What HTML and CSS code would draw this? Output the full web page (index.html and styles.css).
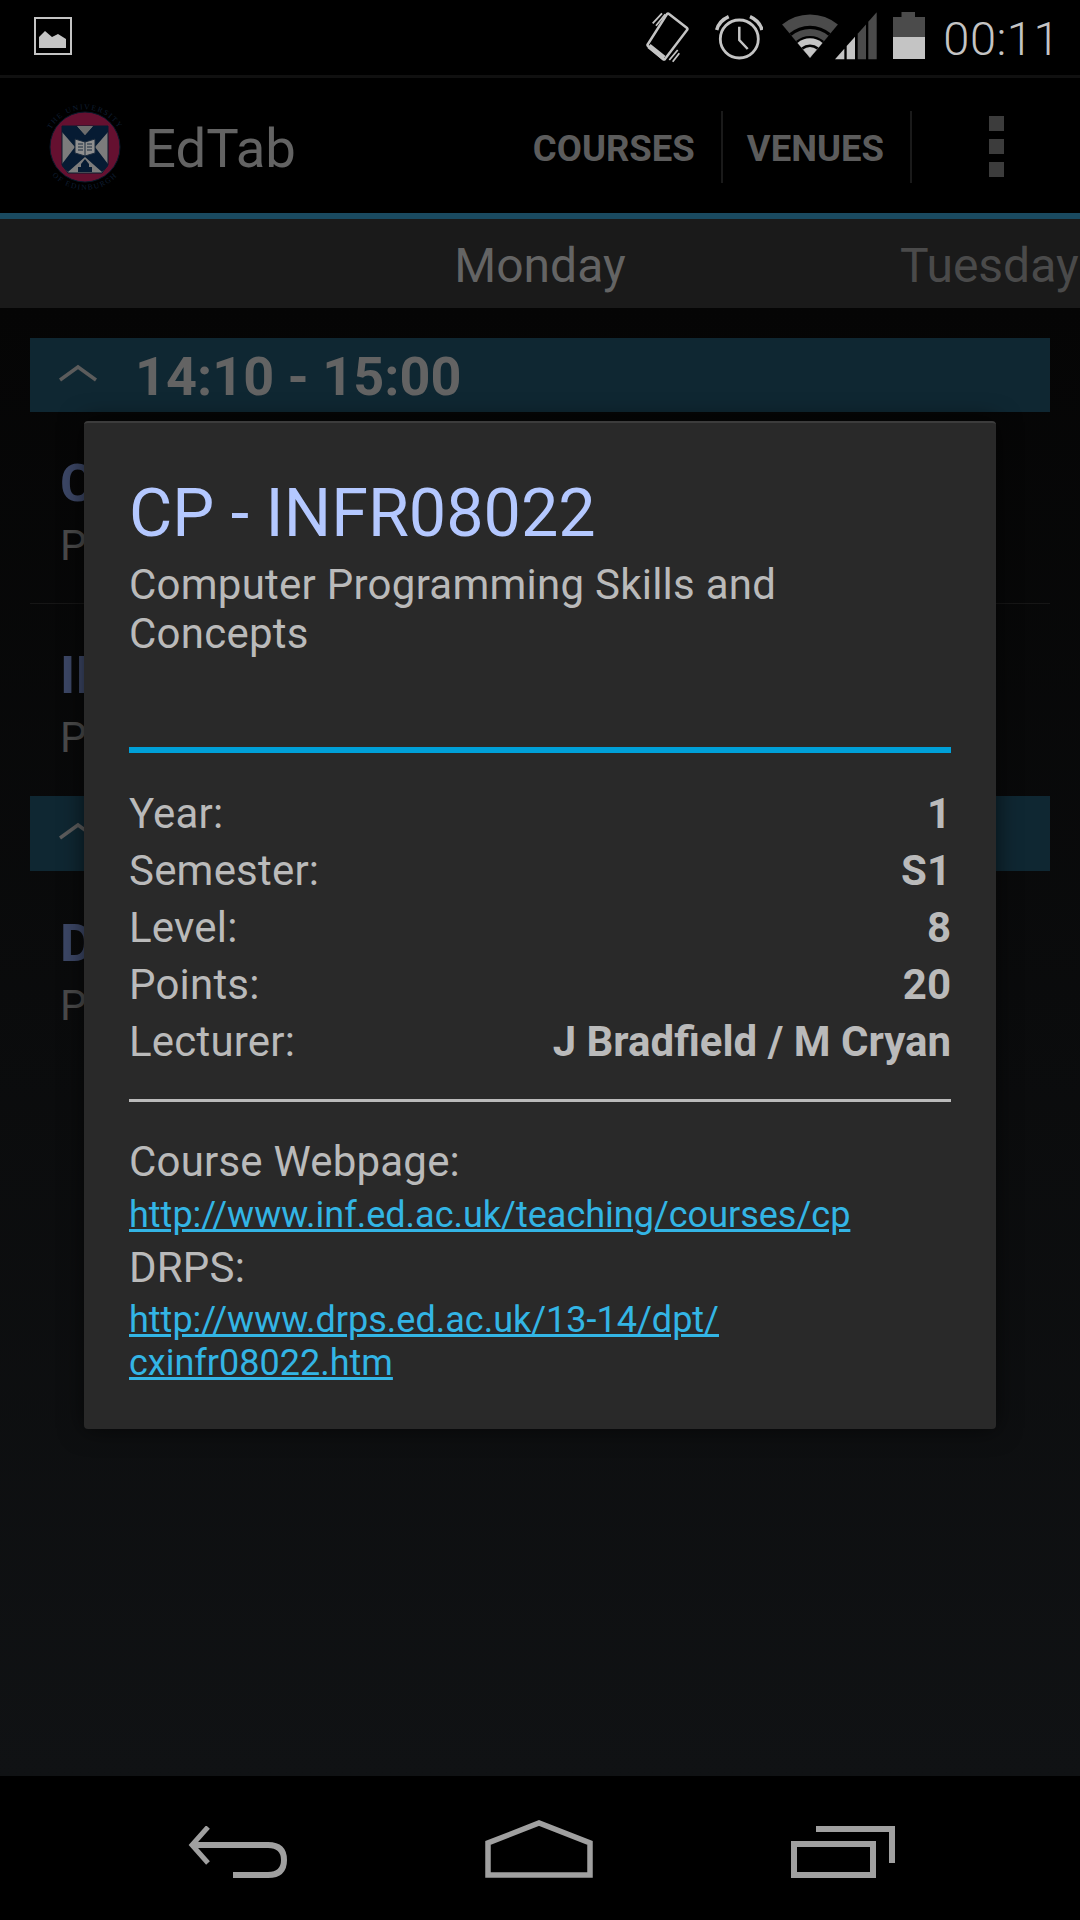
FILE: index.html
```html
<!DOCTYPE html>
<html lang="en">
<head>
    <meta charset="UTF-8">
    <title>EdTab</title>
    <link rel="stylesheet" href="styles.css">
</head>
<body>
    <div class="screen">
        <!-- status bar -->
        <div class="status">
            <svg class="notif" width="38" height="38" viewBox="0 0 38 38">
                <rect x="1" y="1" width="36" height="36" fill="none" stroke="#c4c4c4" stroke-width="2"/>
                <path d="M5 31V20L11 14L18 20L24 17L32 22V31Z" fill="#c4c4c4"/>
            </svg>
            <div class="status-icons">
                <svg class="phone" width="44" height="52" viewBox="0 0 44 52" fill="none" stroke="#c4c4c4">
                    <path d="M23 2L41 16Q42 17 41 18L19 47Q18 48 17 47L2 34Q1 33 2 32L21 2Q22 1 23 2Z" stroke-width="2.500"/>
                    <path d="M3 34L18 46" stroke-width="5"/>
                    <path d="M6.700 11.300L16 1.300M10 13.700L19.300 2.300M23.300 48L31.700 38M26.700 49.700L33.300 41.300" stroke-width="1.800"/>
                </svg>
                <svg class="alarm" width="48" height="46" viewBox="0 0 48 46" fill="none" stroke="#c4c4c4">
                    <circle cx="24.300" cy="24" r="19" stroke-width="2.800"/>
                    <path d="M24.300 11.700V25L32.700 34" stroke-width="2.500"/>
                    <path d="M1.700 15Q4 6 13.700 1.700M47 15Q44.700 6 35 1.700" stroke-width="3.500"/>
                </svg>
                <svg class="wifi" width="96" height="48" viewBox="0 0 96 48">
                    <path d="M29 45.700L1.100 12.600A43.400 43.400 0 0 1 56.900 12.600Z" fill="#4b4b4b"/>
                    <path d="M29 45.700L8.400 21.300A32 32 0 0 1 49.600 21.300Z" fill="#000"/>
                    <path d="M29 45.700L10.500 23.800A28.700 28.700 0 0 1 47.500 23.800Z" fill="#4b4b4b"/>
                    <path d="M29 45.700L15 29.100A21.700 21.700 0 0 1 43 29.100Z" fill="#000"/>
                    <path d="M29 45.700L16.500 30.900A19.400 19.400 0 0 1 41.500 30.900Z" fill="#c4c4c4"/>
                    <path d="M29 45.700L20.400 35.500A13.400 13.400 0 0 1 37.600 35.500Z" fill="#000"/>
                    <path d="M29 45.700L22.100 37.500A10.700 10.700 0 0 1 35.900 37.500Z" fill="#c4c4c4"/>
                    <path d="M54 47.300L63.300 36.800V47.300Z" fill="#c4c4c4"/>
                    <path d="M65.700 34.100L74 24.800V47.300H65.700Z" fill="#c4c4c4"/>
                    <path d="M76.700 21.700L85 12.400V47.300H76.700Z" fill="#4b4b4b"/>
                    <path d="M87.300 9.800L95.700 0.300V47.300H87.300Z" fill="#4b4b4b"/>
                </svg>
                <svg class="battery" width="32" height="47" viewBox="0 0 32 47">
                    <path d="M8.500 0H22V5H32V47H0V5H8.500Z" fill="#4b4b4b"/>
                    <rect y="25" width="32" height="22" fill="#c4c4c4"/>
                </svg>
            </div>
            <span class="clock">00:11</span>
        </div>

        <!-- action bar -->
        <div class="actionbar">
            <svg class="crest" width="90" height="90" viewBox="0 0 90 90">
                <defs>
                    <path id="ring-top" d="M7 52A38.500 38.500 0 1 1 83 52"/>
                    <path id="ring-bottom" d="M1 50A44.500 44.500 0 0 0 89 50"/>
                </defs>
                <text class="crest-text" text-anchor="middle"><textPath href="#ring-top" startOffset="50%">THE UNIVERSITY</textPath></text>
                <text class="crest-text" text-anchor="middle"><textPath href="#ring-bottom" startOffset="50%">OF EDINBURGH</textPath></text>
                <circle cx="45" cy="45" r="35" fill="#651030" stroke="#0b1a2c" stroke-width="1"/>
                <path d="M22 24H68V63L62 71H28L22 63Z" fill="#7c7c7c" stroke="#0b1a2c"/>
                <path d="M22 24H37L45 33L53 24H68V30L55 45L68 62V64L62 70L45 55L28 70L22 64V62L35 45L22 30Z" fill="#061b33"/>
                <path d="M37 24H53L45 33Z" fill="#6c6c6c"/>
                <path d="M35 37L45 40L55 37V51L45 54L35 51Z" fill="#8f8f8f" stroke="#1b2a3c"/>
                <path d="M45 40V54M38 42H43M38 45H43M38 48H43M47 42H52M47 45H52M47 48H52" stroke="#1b2a3c" stroke-width="1"/>
                <path d="M41 62L45 57L49 62V65H41Z" fill="#061b33"/>
                <path d="M38 70V65H52V70Z" fill="#061b33"/>
            </svg>
            <span class="app-title">EdTab</span>
            <div class="actions">
                <span class="action">COURSES</span>
                <span class="action">VENUES</span>
                <div class="overflow"><i></i><i></i><i></i></div>
            </div>
        </div>

        <!-- day tabs -->
        <div class="tabs">
            <span class="tab tab-current">Monday</span>
            <span class="tab tab-next">Tuesday</span>
        </div>

        <!-- timetable behind the dialog, only what shows past its edge -->
        <div class="content">
            <div class="slot">
                <svg class="chevron" width="38" height="18" viewBox="0 0 38 18" fill="none" stroke="#5c5c5c" stroke-width="3.500"><path d="M1 16L19 3L37 16"/></svg>
                <span class="slot-time">14:10 - 15:00</span>
            </div>
            <div class="lecture">
                <div class="lecture-name">C</div>
                <div class="lecture-place">P</div>
            </div>
            <div class="lecture lecture-last">
                <div class="lecture-name">II</div>
                <div class="lecture-place">P</div>
            </div>
            <div class="slot slot-low">
                <svg class="chevron" width="38" height="18" viewBox="0 0 38 18" fill="none" stroke="#5c5c5c" stroke-width="3.500"><path d="M1 16L19 3L37 16"/></svg>
            </div>
            <div class="lecture lecture-last lecture-low">
                <div class="lecture-name">D</div>
                <div class="lecture-place">P</div>
            </div>
        </div>

        <!-- nav bar -->
        <div class="navbar">
            <div class="navbtn">
                <svg width="100" height="52" viewBox="0 0 100 52" fill="none" stroke="#a0a0a0" stroke-width="6">
                    <path d="M20 1L4 19L20 37" stroke-width="5"/>
                    <path d="M5 19H80Q96 19 96 34Q96 49 80 49H45"/>
                </svg>
            </div>
            <div class="navbtn navbtn-home">
                <svg width="108" height="58" viewBox="0 0 108 58" fill="none" stroke="#a0a0a0" stroke-width="5.500">
                    <path d="M3 55V23L54 3L105 23V55Z"/>
                </svg>
            </div>
            <div class="navbtn navbtn-recents">
                <svg width="104" height="52" viewBox="0 0 104 52" fill="none" stroke="#a0a0a0" stroke-width="6">
                    <rect x="3" y="18" width="79" height="31"/>
                    <path d="M25 3H101V37"/>
                </svg>
            </div>
        </div>

        <!-- course dialog -->
        <div class="dialog">
            <h1 class="course-code">CP - INFR08022</h1>
            <p class="course-name">Computer Programming Skills and Concepts</p>
            <div class="rule-blue"></div>
            <div class="facts">
                <div class="fact"><span>Year:</span><b>1</b></div>
                <div class="fact"><span>Semester:</span><b>S1</b></div>
                <div class="fact"><span>Level:</span><b>8</b></div>
                <div class="fact"><span>Points:</span><b>20</b></div>
                <div class="fact"><span>Lecturer:</span><b>J Bradfield / M Cryan</b></div>
            </div>
            <div class="rule-grey"></div>
            <div class="link-label">Course Webpage:</div>
            <a class="link" href="#">http://www.inf.ed.ac.uk/teaching/courses/cp</a>
            <div class="link-label">DRPS:</div>
            <a class="link" href="#">http://www.drps.ed.ac.uk/13-14/dpt/<br>cxinfr08022.htm</a>
        </div>
    </div>
</body>
</html>
```

FILE: styles.css
```css
* {
    box-sizing: border-box;
}

body {
    margin: 0;
    background-color: #000;
    font-family: 'Roboto', 'Noto Sans', sans-serif;
}

.screen {
    position: relative;
    width: 1080px;
    height: 1920px;
    display: flex;
    flex-direction: column;
    overflow: hidden;
}

.status {
    height: 78px;
    flex-shrink: 0;
    display: flex;
    align-items: center;
    padding: 0 20px 3px 34px;
    border-bottom: 3px solid #101010;
    background-color: #000;
}

.status-icons {
    align-self: flex-start;
    margin-left: auto;
    margin-right: 18px;
    padding-top: 12px;
    display: flex;
    align-items: flex-start;
}

.status-icons .alarm {
    margin: 3px 18px 0 25px;
}

.status-icons .battery {
    margin-left: 16px;
}

.clock {
    font-size: 47px;
    font-weight: 300;
    color: #c4c4c4;
    letter-spacing: 0.5px;
    padding-top: 4px;
}

.actionbar {
    height: 135px;
    flex-shrink: 0;
    display: flex;
    align-items: center;
    padding: 2px 0 0 40px;
    background-color: #000;
}

.crest-text {
    font-size: 7.500px;
    letter-spacing: 1.500px;
    fill: #0e1e32;
    font-family: 'Liberation Serif', serif;
}

.app-title {
    font-size: 54.500px;
    color: #636363;
    margin-left: 15px;
    padding-top: 3px;
}

.actions {
    margin-left: auto;
    display: flex;
    align-items: center;
    height: 72px;
}

.action {
    height: 72px;
    display: flex;
    align-items: center;
    padding: 3px 26px 0 24px;
    font-size: 36.500px;
    font-weight: 700;
    color: #5c5c5c;
    border-right: 2px solid #1a1a1a;
}

.overflow {
    width: 168px;
    display: flex;
    flex-direction: column;
    align-items: center;
    gap: 8px;
}

.overflow i {
    width: 15px;
    height: 15px;
    background-color: #3c3c3c;
}

.tabs {
    position: relative;
    height: 95px;
    flex-shrink: 0;
    display: flex;
    align-items: center;
    justify-content: center;
    padding-top: 3px;
    border-top: 6px solid #1a4a60;
    background-color: #1a1a1a;
}

.tab {
    font-size: 48px;
}

.tab-current {
    color: #646464;
}

.tab-next {
    position: absolute;
    left: 900px;
    color: #4a4a4a;
    white-space: nowrap;
}

.content {
    flex: 1;
    padding: 30px 30px 0;
    background: linear-gradient(#050505, #101214);
}

.slot {
    height: 74px;
    display: flex;
    align-items: center;
    padding-left: 29px;
    background-color: #0f2732;
}

.slot-low {
    height: 75px;
}

.chevron {
    margin-bottom: 5px;
}

.slot-time {
    margin-left: 38px;
    padding-top: 3px;
    font-size: 54px;
    font-weight: 700;
    color: #636363;
}

.lecture {
    height: 192px;
    padding: 44px 0 0 30px;
    border-bottom: 1px solid #161616;
}

.lecture-low {
    padding-top: 45px;
}

.lecture-last {
    border-bottom: none;
}

.lecture-name {
    font-size: 52px;
    font-weight: 700;
    color: #3c4766;
    line-height: 56px;
}

.lecture-place {
    margin-top: 10px;
    font-size: 42px;
    color: #4a4a4a;
    line-height: 48px;
}

.navbar {
    height: 144px;
    flex-shrink: 0;
    display: flex;
    padding: 0 90px;
    background-color: #000;
}

.navbtn {
    flex: 1;
    display: flex;
    justify-content: center;
    align-items: flex-end;
    padding-bottom: 42px;
}

.navbtn-home {
    padding-left: 6px;
}

.navbtn-recents {
    padding-left: 9px;
}

.dialog {
    position: absolute;
    left: 84px;
    top: 421px;
    width: 912px;
    height: 1008px;
    padding: 49px 45px 0 45px;
    background-color: #292929;
    border-radius: 4px;
    border-top: 2px solid #3c3c3c;
    box-shadow: 0 0 24px rgba(0, 0, 0, 0.6);
    color: #bababa;
}

.course-code {
    margin: 0 0 5px;
    font-size: 66.500px;
    font-weight: 400;
    line-height: 83px;
    color: #b4c8ff;
}

.course-name {
    margin: 0;
    font-size: 42px;
    line-height: 49px;
    letter-spacing: 0.25px;
}

.rule-blue {
    height: 6px;
    margin-top: 89px;
    background-color: #00a0d8;
}

.facts {
    margin-top: 32px;
}

.fact {
    display: flex;
    justify-content: space-between;
    height: 57px;
    align-items: center;
    font-size: 42px;
}

.fact span {
    letter-spacing: 0.2px;
}

.rule-grey {
    height: 3px;
    margin-top: 29px;
    background-color: #bababa;
}

.link-label {
    font-size: 42px;
    line-height: 60px;
    margin-top: 1px;
    margin-bottom: 1px;
    letter-spacing: 0.2px;
}

.rule-grey + .link-label {
    margin-top: 30px;
    margin-bottom: 2px;
}

.link {
    display: block;
    font-size: 36px;
    line-height: 43px;
    color: #33b5e5;
}
```
